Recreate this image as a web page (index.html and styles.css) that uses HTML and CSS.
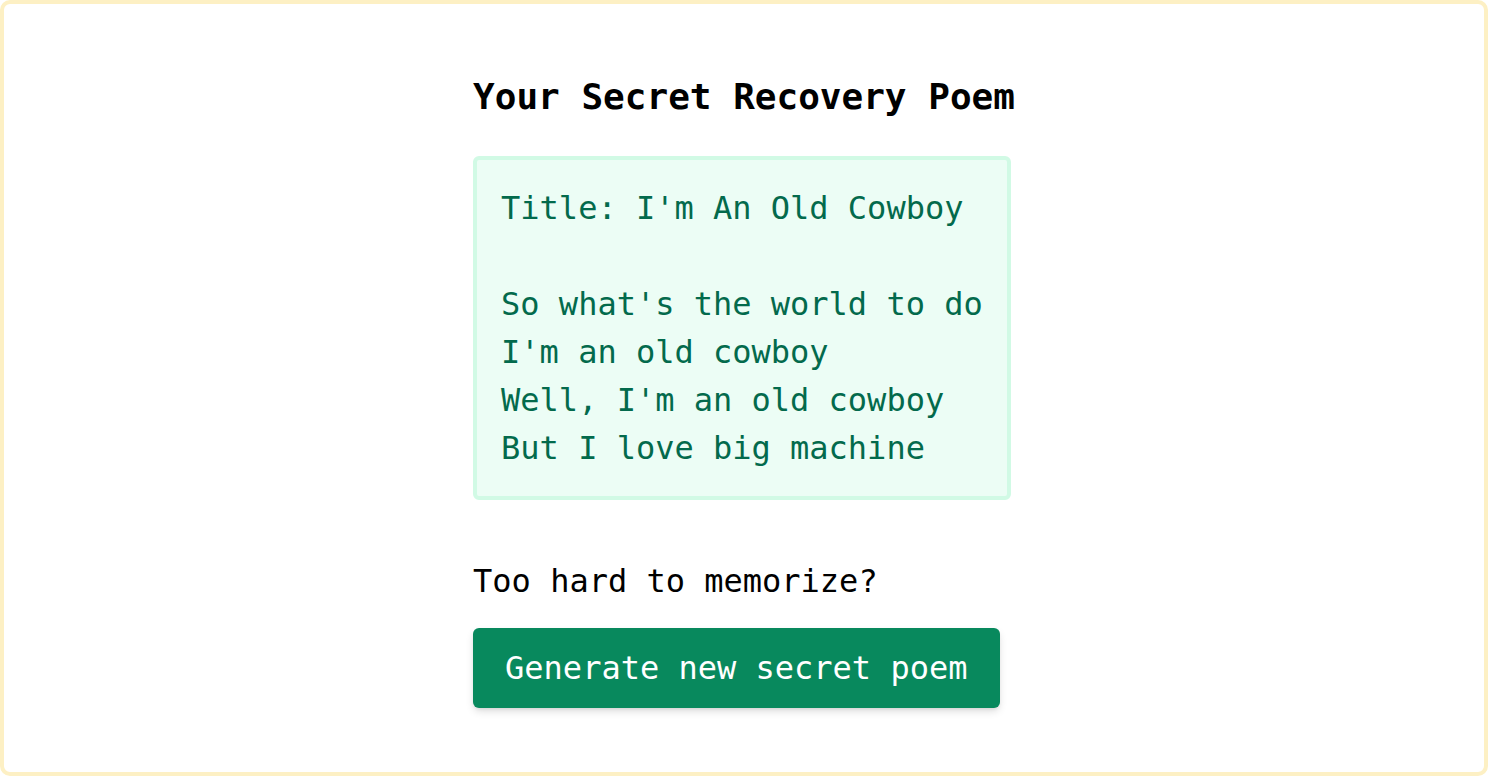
FILE: index.html
```html
<!DOCTYPE html>
<html lang="en">
<head>
<meta charset="utf-8">
<title>Your Secret Recovery Poem</title>
<link rel="stylesheet" href="styles.css">
</head>
<body>
<div class="frame">
  <main class="column">
    <h1 class="title">Your Secret Recovery Poem</h1>
    <div class="poem">Title: I'm An Old Cowboy

So what's the world to do
I'm an old cowboy
Well, I'm an old cowboy
But I love big machine</div>
    <p class="hint">Too hard to memorize?</p>
    <button class="generate" type="button">Generate new secret poem</button>
  </main>
</div>
</body>
</html>
```

FILE: styles.css
```css
* { box-sizing: border-box; }

html, body {
  margin: 0;
  padding: 0;
  background: #ffffff;
}

body {
  font-family: "DejaVu Sans Mono", "Liberation Mono", monospace;
  color: #000000;
}

.frame {
  height: 776px;
  border: 4px solid #fdf0c4;
  border-radius: 10px;
  display: flex;
  justify-content: center;
  background: #ffffff;
}

.column {
  display: flex;
  flex-direction: column;
  align-items: flex-start;
  padding-top: 69px;
}

.title {
  margin: 0;
  font-size: 36px;
  line-height: 48px;
  font-weight: 700;
}

.poem {
  margin-top: 35px;
  padding: 24px;
  border: 4px solid #d1fae5;
  border-radius: 6px;
  background: #ecfdf5;
  color: #036a4c;
  font-size: 32px;
  line-height: 48px;
  white-space: pre;
}

.hint {
  margin: 57px 0 0;
  font-size: 32px;
  line-height: 48px;
}

.generate {
  margin-top: 23px;
  padding: 16px 33px 16px 32px;
  border: none;
  border-radius: 6px;
  background: #08895d;
  color: #ffffff;
  font-family: inherit;
  font-size: 32px;
  line-height: 48px;
  box-shadow: 0 4px 8px -1px rgba(0, 0, 0, 0.14), 0 2px 4px -2px rgba(0, 0, 0, 0.12);
  cursor: pointer;
}
```
